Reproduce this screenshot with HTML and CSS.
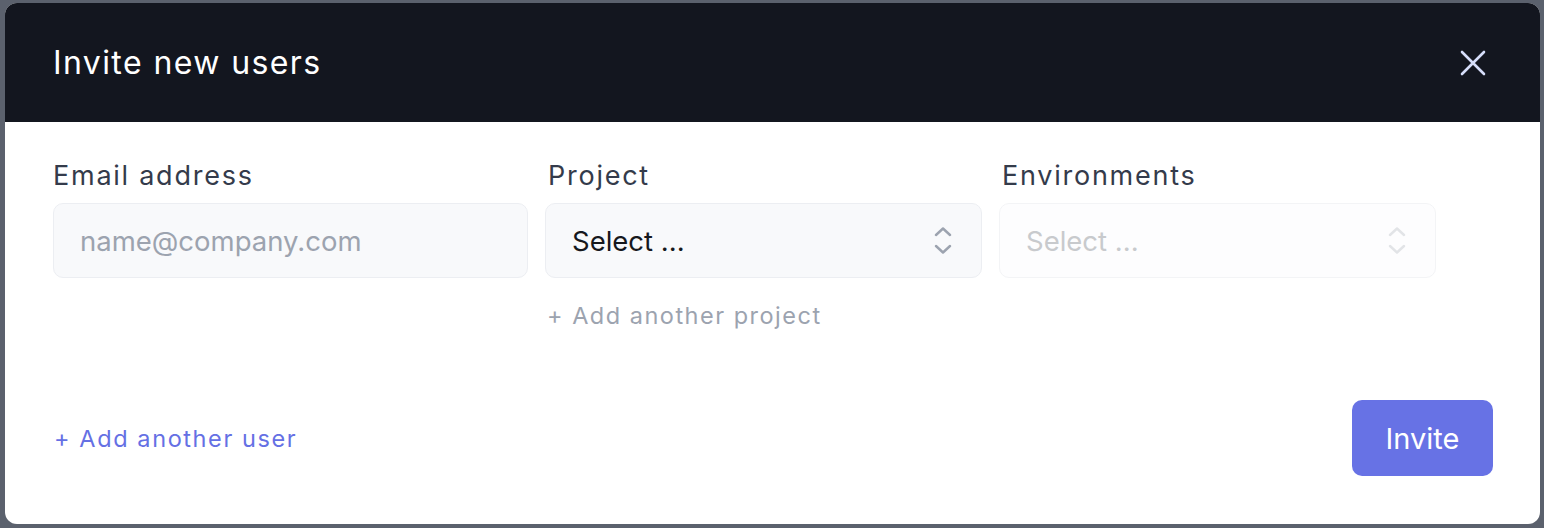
FILE: index.html
```html
<!DOCTYPE html>
<html>
<head>
<meta charset="utf-8">
<link rel="stylesheet" href="styles.css">
</head>
<body>
<div class="modal">
  <div class="header">
    <h1 class="title">Invite new users</h1>
    <button class="close" aria-label="Close">
      <svg width="26" height="26" viewBox="0 0 26 26"><path d="M2 2L24 24M24 2L2 24" stroke="#d6defa" stroke-width="2.6" stroke-linecap="round"/></svg>
    </button>
  </div>
  <div class="body">
    <div class="row">
      <div class="field f-email">
        <label class="label">Email address</label>
        <div class="input placeholder">name@company.com</div>
      </div>
      <div class="field f-sel">
        <label class="label">Project</label>
        <div class="input select"><span>Select ...</span>
          <svg class="chev" width="18" height="27" viewBox="0 0 18 27"><path d="M2 8L9 1.5L16 8M2 19L9 25.5L16 19" fill="none" stroke="#9ca3af" stroke-width="2.4" stroke-linecap="round" stroke-linejoin="round"/></svg>
        </div>
        <div class="add-project">+ Add another project</div>
      </div>
      <div class="field f-sel">
        <label class="label">Environments</label>
        <div class="input select disabled"><span>Select ...</span>
          <svg class="chev" width="18" height="27" viewBox="0 0 18 27"><path d="M2 8L9 1.5L16 8M2 19L9 25.5L16 19" fill="none" stroke="#e2e4e7" stroke-width="2.4" stroke-linecap="round" stroke-linejoin="round"/></svg>
        </div>
      </div>
    </div>
    <div class="footer">
      <div class="add-user">+ Add another user</div>
      <button class="invite">Invite</button>
    </div>
  </div>
</div>
</body>
</html>
```
FILE: styles.css
```css
html, body { margin: 0; padding: 0; }
body {
  background: #5b616d;
  width: 1544px;
  height: 528px;
  font-family: Inter, "Noto Sans", sans-serif;
  padding: 3px 4px 4px 5px;
  box-sizing: border-box;
}
.modal {
  width: 1535px;
  height: 521px;
  background: #fff;
  border-radius: 12px;
  overflow: hidden;
  display: flex;
  flex-direction: column;
}
.header {
  background: #13161f;
  height: 119px;
  display: flex;
  align-items: center;
  justify-content: space-between;
  padding: 0 54px 0 48px;
  flex-shrink: 0;
}
.title {
  margin: 0;
  color: #fff;
  font-size: 32px;
  font-weight: 400;
  letter-spacing: 1.4px;
}
.close {
  background: none;
  border: 0;
  padding: 0;
  display: flex;
}
.body {
  flex: 1;
  padding: 37px 47px 48px 48px;
  display: flex;
  flex-direction: column;
  justify-content: space-between;
}
.row {
  display: flex;
  gap: 17px;
}
.field { display: flex; flex-direction: column; }
.f-email { width: 475px; }
.f-sel { width: 437px; }
.label {
  font-size: 27px;
  color: #343b4b;
  letter-spacing: 1.75px;
  height: 44px;
  line-height: 33px;
  padding-left: 0;
}
.f-sel .label { padding-left: 3px; }
.input {
  height: 75px;
  box-sizing: border-box;
  border: 1px solid #eceef2;
  background: #f8f9fb;
  border-radius: 10px;
  display: flex;
  align-items: center;
  padding: 0 29px 0 26px;
  font-size: 27.5px;
}
.placeholder { color: #9ca3af; }
.select { justify-content: space-between; color: #16181d; }
.select.disabled { background: #fdfdfe; border-color: #f3f4f6; color: #c8cacd; }
.chev { display: block; }
.add-project {
  margin-top: 23px;
  font-size: 23.5px;
  color: #9ca3af;
  letter-spacing: 1.5px;
  padding-left: 2px;
}
.footer {
  display: flex;
  justify-content: space-between;
  align-items: center;
}
.add-user {
  font-size: 23.5px;
  color: #6570e4;
  letter-spacing: 1.6px;
  padding-left: 1px;
}
.invite {
  background: #6772e5;
  color: #fff;
  border: 0;
  border-radius: 10px;
  width: 141px;
  height: 76px;
  font-family: inherit;
  font-size: 29px;
}
```
